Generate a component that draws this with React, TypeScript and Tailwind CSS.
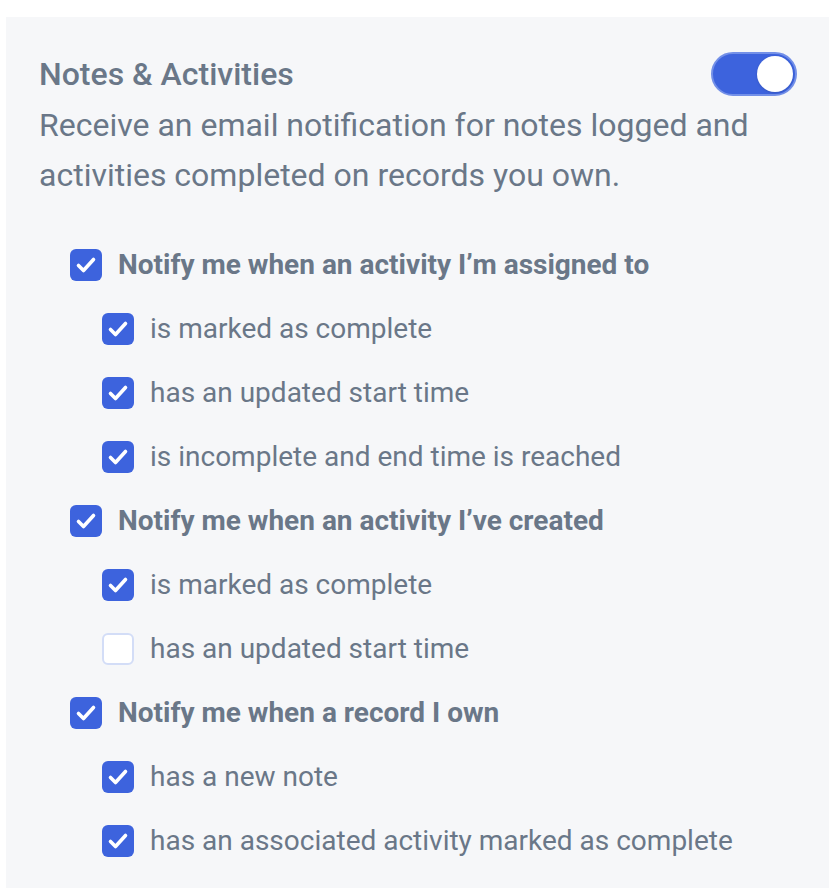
import { useState } from "react";

type Item = { label: string; checked: boolean };
type Group = { title: string; checked: boolean; items: Item[] };

const initialGroups: Group[] = [
  {
    title: "Notify me when an activity I’m assigned to",
    checked: true,
    items: [
      { label: "is marked as complete", checked: true },
      { label: "has an updated start time", checked: true },
      { label: "is incomplete and end time is reached", checked: true },
    ],
  },
  {
    title: "Notify me when an activity I’ve created",
    checked: true,
    items: [
      { label: "is marked as complete", checked: true },
      { label: "has an updated start time", checked: false },
    ],
  },
  {
    title: "Notify me when a record I own",
    checked: true,
    items: [
      { label: "has a new note", checked: true },
      { label: "has an associated activity marked as complete", checked: true },
    ],
  },
];

function Checkbox({ checked, onClick }: { checked: boolean; onClick: () => void }) {
  return (
    <button
      type="button"
      onClick={onClick}
      className={
        checked
          ? "w-8 h-8 shrink-0 rounded-md bg-[#3d63dd] flex items-center justify-center"
          : "w-8 h-8 shrink-0 rounded-md bg-white border-2 border-[#d3ddf7]"
      }
    >
      {checked && (
        <svg width="32" height="32" viewBox="0 0 32 32" fill="none">
          <path
            d="M8.5 16.5l5 5L23.5 10.5"
            stroke="white"
            strokeWidth="3.6"
            strokeLinecap="round"
            strokeLinejoin="round"
          />
        </svg>
      )}
    </button>
  );
}

export default function App() {
  const [enabled, setEnabled] = useState(true);
  const [groups, setGroups] = useState(initialGroups);

  const toggleGroup = (gi: number) => {
    setGroups(groups.map((g, i) => (i === gi ? { ...g, checked: !g.checked } : g)));
  };
  const toggleItem = (gi: number, ii: number) => {
    setGroups(
      groups.map((g, i) =>
        i === gi
          ? { ...g, items: g.items.map((it, j) => (j === ii ? { ...it, checked: !it.checked } : it)) }
          : g
      )
    );
  };

  return (
    <div className="bg-white pt-[17px] pl-[6px] pr-[7px] font-['Roboto',sans-serif]">
      <div className="bg-[#f6f7f9] pl-[33px] pr-[32px] pt-[37px] pb-[31px] text-[#6a7788]">
        <div className="flex items-start justify-between">
          <h2 className="text-[32px] leading-[40px] font-medium">Notes &amp; Activities</h2>
          <button
            type="button"
            onClick={() => setEnabled(!enabled)}
            className={
              enabled
                ? "mt-[-2px] w-[86px] h-[44px] rounded-full bg-[#3d63dd] border-2 border-[#7390e8] flex items-center justify-end pr-[2px]"
                : "mt-[-2px] w-[86px] h-[44px] rounded-full bg-[#d5dae2] border-2 border-[#c5ccd6] flex items-center justify-start pl-[2px]"
            }
          >
            <span className="w-9 h-9 rounded-full bg-white shadow" />
          </button>
        </div>
        <p className="text-[32px] leading-[50px] mt-[4px] pr-[40px]">
          Receive an email notification for notes logged and activities completed on records you own.
        </p>

        <div className="mt-[49px] pl-[31px] flex flex-col gap-[32px]">
          {groups.map((g, gi) => (
            <div key={gi} className="flex flex-col gap-[32px]">
              <label className="flex items-center gap-4">
                <Checkbox checked={g.checked} onClick={() => toggleGroup(gi)} />
                <span className="text-[28px] leading-[32px] font-bold">{g.title}</span>
              </label>
              {g.items.map((it, ii) => (
                <label key={ii} className="flex items-center gap-4 pl-8">
                  <Checkbox checked={it.checked} onClick={() => toggleItem(gi, ii)} />
                  <span className="text-[28px] leading-[32px]">{it.label}</span>
                </label>
              ))}
            </div>
          ))}
        </div>
      </div>
    </div>
  );
}
